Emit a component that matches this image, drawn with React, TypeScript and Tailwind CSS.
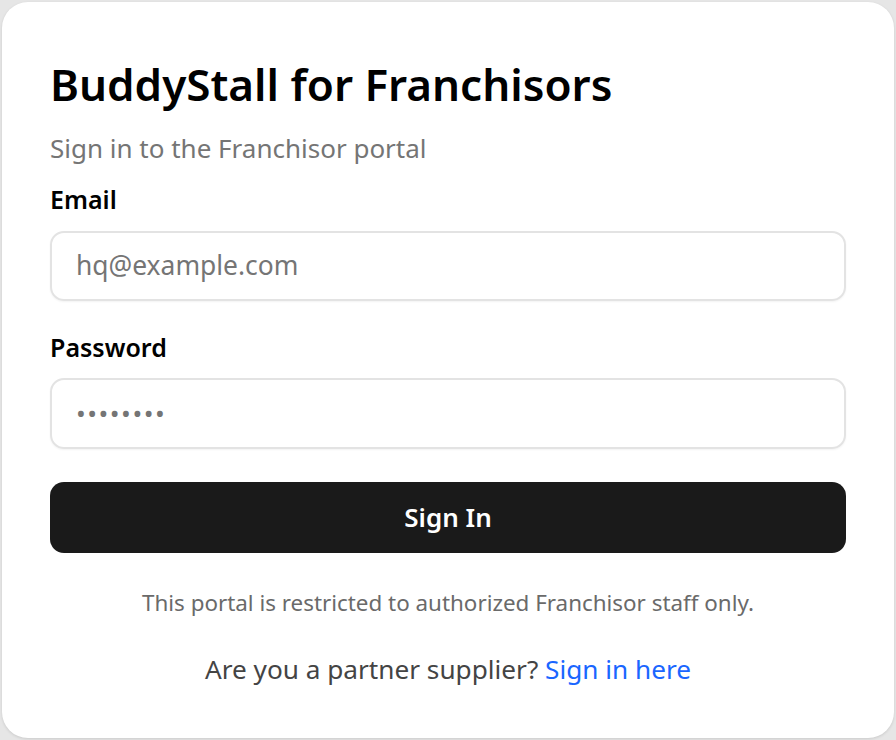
export default function App() {
  return (
    <div className="min-h-screen bg-[#e6e6e6] p-[2px]" style={{ fontFamily: '"Noto Sans", "Open Sans", sans-serif' }}>
      <div className="h-[736px] rounded-[26px] bg-white px-[48px] pt-[54px] shadow-[0_1px_3px_rgba(0,0,0,0.12)]">
        <h1 className="text-[44px] font-semibold leading-[56px] text-black">BuddyStall for Franchisors</h1>
        <p className="mt-[19px] text-[26px] leading-[34px] text-[#757575]">Sign in to the Franchisor portal</p>

        <label className="mt-[18px] block text-[25px] font-semibold leading-[32px] text-black">Email</label>
        <div className="mt-[16px] flex h-[70px] items-center rounded-[14px] border-2 border-[#e3e3e3] px-[24px] shadow-[0_1px_2px_rgba(0,0,0,0.05)]">
          <span className="text-[26.4px] text-[#757575]">hq@example.com</span>
        </div>

        <label className="mt-[30px] block text-[25px] font-semibold leading-[32px] text-black">Password</label>
        <div className="mt-[15px] flex h-[71px] items-center rounded-[14px] border-2 border-[#e3e3e3] px-[24px] shadow-[0_1px_2px_rgba(0,0,0,0.05)]">
          <span className="text-[26px] tracking-[1.5px] text-[#757575]">••••••••</span>
        </div>

        <button className="mt-[33px] flex h-[71px] w-full items-center justify-center rounded-[14px] bg-[#1a1a1a] text-[26px] font-semibold text-white">
          Sign In
        </button>

        <p className="mt-[35px] text-center text-[22.4px] leading-[30px] text-[#6a6a6a]">This portal is restricted to authorized Franchisor staff only.</p>
        <p className="mt-[34px] text-center text-[26.2px] leading-[34px] text-[#444]">
          Are you a partner supplier? <a className="text-[#1a66ff]">Sign in here</a>
        </p>
      </div>
    </div>
  );
}
